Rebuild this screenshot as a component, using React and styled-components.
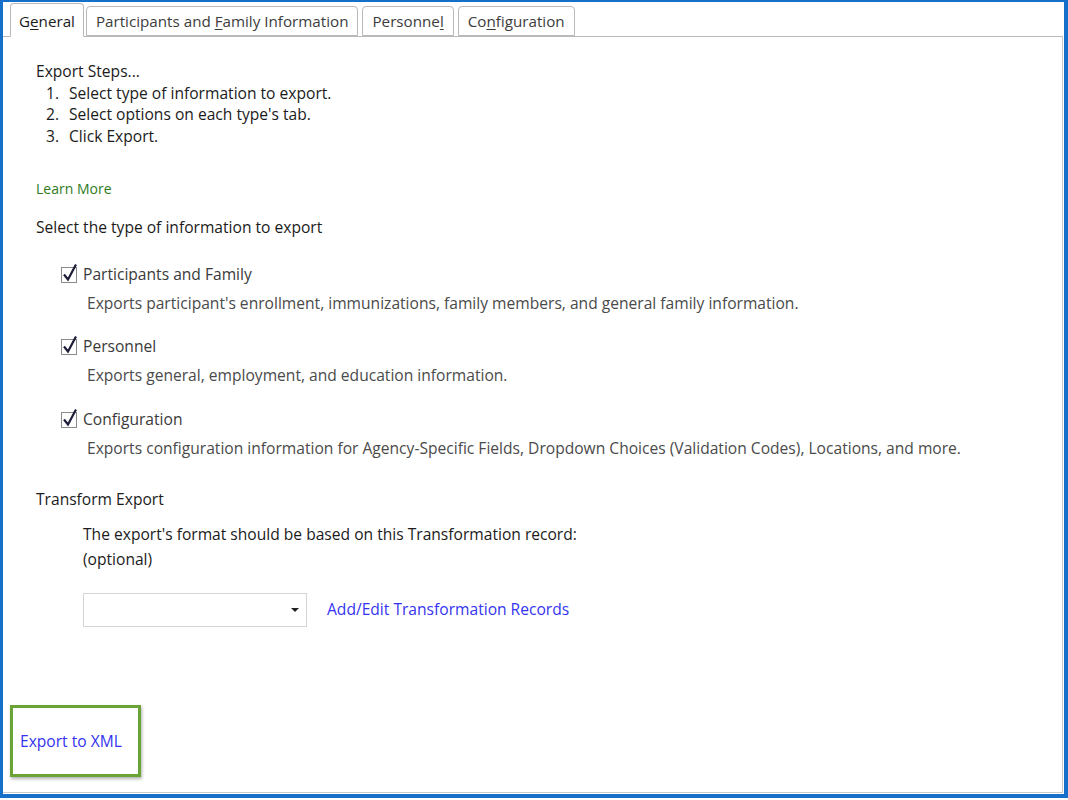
import React from 'react';
import styled, { createGlobalStyle } from 'styled-components';

const GlobalStyle = createGlobalStyle`
  html, body {
    margin: 0;
    padding: 0;
    background: #ffffff;
  }
  body {
    font-family: "Segoe UI", "Open Sans", "Noto Sans", sans-serif;
    color: #1b1b1b;
  }
`;

const tabs = [
  { pre: 'G', key: 'e', post: 'neral', active: true },
  { pre: 'Participants and ', key: 'F', post: 'amily Information' },
  { pre: 'Personne', key: 'l', post: '' },
  { pre: 'Co', key: 'n', post: 'figuration' },
];

const steps = [
  'Select type of information to export.',
  "Select options on each type's tab.",
  'Click Export.',
];

const options = [
  {
    label: 'Participants and Family',
    desc: "Exports participant's enrollment, immunizations, family members, and general family information.",
    gap: 26,
  },
  {
    label: 'Personnel',
    desc: 'Exports general, employment, and education information.',
    gap: 22,
  },
  {
    label: 'Configuration',
    desc: 'Exports configuration information for Agency-Specific Fields, Dropdown Choices (Validation Codes), Locations, and more.',
    gap: 23,
  },
];

const CheckIcon = () => (
  <svg width="20" height="22" viewBox="0 0 20 22">
    <rect x="1.5" y="5.5" width="15" height="15" fill="#fff" stroke="#8a8a8a" strokeWidth="1" />
    <path d="M4 12.5 L8 17.5 L16 2.5" fill="none" stroke="#1d1d3a" strokeWidth="2.2" strokeLinejoin="miter" />
  </svg>
);

const App = () => {
  return (
    <>
      <GlobalStyle />
      <Frame>
        <TabStrip>
          {tabs.map((t, i) => (
            <Tab key={i} active={t.active}>
              <span>{t.pre}<u>{t.key}</u>{t.post}</span>
            </Tab>
          ))}
        </TabStrip>
        <Panel>
          <Content>
            <Text>Export Steps...</Text>
            {steps.map((s, i) => (
              <Step key={i}>
                <StepNum>{i + 1}.</StepNum>
                <span>{s}</span>
              </Step>
            ))}
            <LearnMore>Learn More</LearnMore>
            <Heading gap={17}>Select the type of information to export</Heading>
            {options.map((o, i) => (
              <Option key={i} gap={o.gap}>
                <OptionLabel>
                  <CheckIcon />
                  <span>{o.label}</span>
                </OptionLabel>
                <OptionDesc>{o.desc}</OptionDesc>
              </Option>
            ))}
            <Heading gap={30}>Transform Export</Heading>
            <Indented>
              <FormatText>
                The export's format should be based on this Transformation record:
                <br />
                (optional)
              </FormatText>
              <DropRow>
                <Dropdown>
                  <Arrow />
                </Dropdown>
                <Link>Add/Edit Transformation Records</Link>
              </DropRow>
            </Indented>
          </Content>
          <Footer>
            <ExportBox>
              <Link>Export to XML</Link>
            </ExportBox>
          </Footer>
        </Panel>
      </Frame>
    </>
  );
};

export default App;

const Frame = styled.div`
  box-sizing: border-box;
  width: 1068px;
  height: 798px;
  border-style: solid;
  border-color: #1670c9;
  border-width: 2px 4px 4px 3px;
  display: flex;
  flex-direction: column;
  background: #fff;
`;

const TabStrip = styled.div`
  display: flex;
  align-items: flex-end;
  gap: 4px;
  height: 34px;
  padding-left: 7px;
  position: relative;
  z-index: 1;
`;

const Tab = styled.div`
  box-sizing: border-box;
  height: ${(p) => (p.active ? '34px' : '30px')};
  margin-bottom: ${(p) => (p.active ? '-1px' : '0')};
  margin-right: ${(p) => (p.active ? '-2px' : '0')};
  padding: 0 ${(p) => (p.active ? '8px' : '9px')};
  padding-top: ${(p) => (p.active ? '2px' : '0')};
  display: flex;
  align-items: center;
  background: #fff;
  border: 1px solid #b9b9b9;
  border-bottom: ${(p) => (p.active ? '1px solid #fff' : '1px solid #b9b9b9')};
  border-radius: 4px 4px 0 0;
  font-size: 15.2px;
  color: ${(p) => (p.active ? '#1b1b1b' : '#3c3c3c')};
  white-space: pre;

  u {
    text-underline-offset: 2px;
  }
`;

const Panel = styled.div`
  flex: 1;
  display: flex;
  flex-direction: column;
  border-top: 1px solid #b9b9b9;
  border-right: 1px solid #c9c9c9;
  border-bottom: 1px solid #c9c9c9;
  margin-right: 1px;
  margin-bottom: 1px;
`;

const Content = styled.div`
  padding: 24px 0 0 33px;
  font-size: 15.6px;
  line-height: 21.5px;
`;

const Text = styled.div``;

const Step = styled.div`
  display: flex;
  padding-left: 10px;
`;

const StepNum = styled.span`
  width: 23px;
`;

const LearnMore = styled.div`
  margin-top: 31px;
  font-size: 14px;
  color: #2f7a1c;
`;

const Heading = styled.div`
  margin-top: ${(p) => p.gap}px;
`;

const Option = styled.div`
  margin-top: ${(p) => p.gap}px;
  padding-left: 24px;
`;

const OptionLabel = styled.div`
  display: flex;
  align-items: center;
  gap: 3px;
  color: #3a3a3a;

  svg {
    margin-top: -4px;
  }
`;

const OptionDesc = styled.div`
  margin-top: 7px;
  padding-left: 27px;
  color: #4a4a4a;
`;

const Indented = styled.div`
  padding-left: 47px;
`;

const FormatText = styled.div`
  margin-top: 11px;
  line-height: 25px;
`;

const DropRow = styled.div`
  display: flex;
  align-items: center;
  gap: 20px;
  margin-top: 21px;
`;

const Dropdown = styled.div`
  box-sizing: border-box;
  width: 224px;
  height: 34px;
  border: 1px solid #d4d4d4;
  display: flex;
  align-items: center;
  justify-content: flex-end;
  padding-right: 7px;
`;

const Arrow = styled.span`
  width: 0;
  height: 0;
  border-left: 4px solid transparent;
  border-right: 4px solid transparent;
  border-top: 4px solid #222;
`;

const Link = styled.span`
  color: #3434ef;
  font-size: 15.6px;
  cursor: pointer;
`;

const Footer = styled.div`
  margin-top: auto;
  padding: 0 0 15px 7px;
`;

const ExportBox = styled.div`
  box-sizing: border-box;
  width: 131px;
  height: 72px;
  border: 3px solid #6aa437;
  box-shadow: 1px 2px 3px rgba(0, 0, 0, 0.3);
  display: flex;
  align-items: center;
  padding-left: 7px;
`;
